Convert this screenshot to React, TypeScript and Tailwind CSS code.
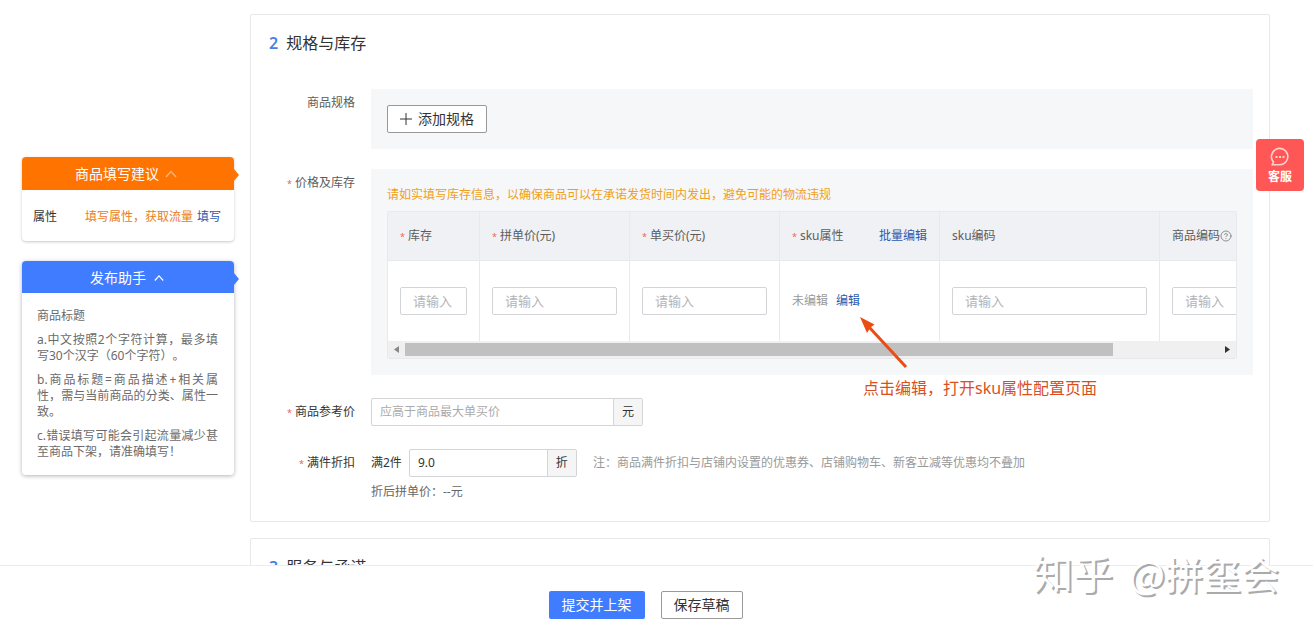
import React from "react";
import { CircleHelp } from "lucide-react";

const tips = [
  ["a.中文按照2个字符计算，最多填", "写30个汉字（60个字符）。"],
  ["b.商品标题=商品描述+相关属", "性，需与当前商品的分类、属性一", "致。"],
  ["c.错误填写可能会引起流量减少甚", "至商品下架，请准确填写！"],
];

const ChevronUp = ({ className }: { className?: string }) => (
  <svg viewBox="0 0 12 8" className={className} fill="none" stroke="currentColor" strokeWidth="1.5">
    <path d="M1 7 6 1.5 11 7" />
  </svg>
);

const Star = () => <span className="mr-[3px] text-[9px] leading-none text-[#f0605f]">*</span>;

const SideHeader = ({ title, className, chevron, notch }: { title: string; className: string; chevron: string; notch: string }) => (
  <button type="button" className={`relative flex w-full items-center justify-center rounded-t text-sm leading-5 text-white ${className}`}>
    {title}
    <ChevronUp className={chevron} />
    <svg viewBox="0 0 5 12" className={`absolute top-3 left-full h-3 w-[5px] ${notch}`}>
      <path d="M0 0 5 6 0 12Z" />
    </svg>
  </button>
);

const Row = ({ label, required, htmlFor, children, className = "" }: { label: string; required?: boolean; htmlFor?: string; children: React.ReactNode; className?: string }) => (
  <div className={`flex items-start ${className}`}>
    <label htmlFor={htmlFor} className="mr-4 w-[104px] shrink-0 pt-1 text-right leading-5">
      {required && <Star />}
      {label}
    </label>
    {children}
  </div>
);

const SkuInput = ({ label }: { label: string }) => (
  <input
    type="text"
    aria-label={label}
    placeholder="请输入"
    className="block h-7 w-full rounded-xs border border-[#d2d4d8] bg-white px-3 text-[13px] placeholder:text-[#b4b4b8]"
  />
);

const th = "h-[49px] border-r border-b border-[#e8e9ee] px-3 text-left font-normal";
const td = "h-20 border-r border-[#e8e9ee] px-3";

const SkuTable = () => (
  <div className="mt-[6px] overflow-hidden rounded-xs border border-[#e8e9ee] bg-white">
    <div className="overflow-hidden">
      <table className="w-[977px] table-fixed border-separate border-spacing-0">
        <colgroup>
          <col className="w-[92px]" />
          <col className="w-[150px]" />
          <col className="w-[150px]" />
          <col className="w-[160px]" />
          <col className="w-[220px]" />
          <col />
        </colgroup>
        <thead className="bg-[#f0f1f5]">
          <tr>
            <th className={th}><Star />库存</th>
            <th className={th}><Star />拼单价(元)</th>
            <th className={th}><Star />单买价(元)</th>
            <th className={th}>
              <div className="flex justify-between">
                <span><Star />sku属性</span>
                <a href="#batch" className="text-[#2c59ae]">批量编辑</a>
              </div>
            </th>
            <th className={th}>sku编码</th>
            <th className={th}>
              <div className="flex items-center">
                商品编码
                <CircleHelp className="size-3 text-[#777]" strokeWidth={1.6} />
              </div>
            </th>
          </tr>
        </thead>
        <tbody>
          <tr>
            <td className={td}><SkuInput label="库存" /></td>
            <td className={td}><SkuInput label="拼单价(元)" /></td>
            <td className={td}><SkuInput label="单买价(元)" /></td>
            <td className={td}>
              <span className="mr-2 text-[#999]">未编辑</span>
              <a href="#edit" className="text-[#2c59ae]">编辑</a>
            </td>
            <td className={td}><SkuInput label="sku编码" /></td>
            <td className={td}><SkuInput label="商品编码" /></td>
          </tr>
        </tbody>
      </table>
    </div>
    <div className="flex h-[17px] items-center bg-[#f0f0f0]">
      <svg viewBox="0 0 17 17" className="size-[17px] shrink-0 fill-[#888]">
        <path d="M11 5v7L6 8.5Z" />
      </svg>
      <div className="flex-1">
        <div className="h-[13px] w-[87%] bg-[#c0c0c0]" />
      </div>
      <svg viewBox="0 0 17 17" className="size-[17px] shrink-0 fill-[#333]">
        <path d="M6 5v7l5-3.5Z" />
      </svg>
    </div>
  </div>
);

export default function App() {
  return (
    <div className="relative flex h-screen flex-col overflow-hidden bg-white font-['Noto_Sans','Noto_Sans_CJK_SC',sans-serif] text-xs text-[#5c5c5c] [text-spacing-trim:space-all]">
      <div className="flex min-h-0 flex-1 items-start overflow-hidden pr-[43px] pl-[22px]">
        <aside className="mt-[157px] mr-4 w-[212px] shrink-0">
          <section className="rounded shadow-[0_1px_3px_rgba(0,0,0,0.22)]">
            <SideHeader title="商品填写建议" className="h-[33px] bg-[#ff7300] pr-1" chevron="ml-1.5 h-2 w-3 text-[#ffb27a]" notch="fill-[#ff7300]" />
            <div className="flex h-[51px] items-center px-[11px] pt-0.5">
              <span className="mr-auto text-[#333]">属性</span>
              <span className="mr-1 text-[#e8801a]">填写属性，获取流量</span>
              <a href="#fill" className="mr-0.5 text-[#2c59ae]">填写</a>
            </div>
          </section>
          <section className="mt-5 rounded shadow-[0_1px_4px_rgba(0,0,0,0.3)]">
            <SideHeader title="发布助手" className="h-8 bg-[#407cff] pt-0.5 pr-0.5" chevron="ml-2 h-2 w-2.5 text-white" notch="fill-[#407cff]" />
            <div className="py-[15px] pr-4 pl-[15px] leading-4 text-[#6b6b6b]">
              <p>商品标题</p>
              {tips.map((lines) => (
                <p key={lines[0]} className="mt-2">
                  {lines.map((line, i) => (
                    <span key={line} className={i < lines.length - 1 ? "block text-justify [text-align-last:justify]" : "block"}>
                      {line}
                    </span>
                  ))}
                </p>
              ))}
            </div>
          </section>
        </aside>

        <main className="min-w-0 flex-1 pt-[14px]">
          <section className="relative rounded-xs border border-[#e8e8e8] pt-4 pr-4 pb-[21px]">
            <h2 className="mb-[34px] pl-[18px] text-base leading-6 text-[#333]">
              <span className="mr-2 font-semibold text-[#4a7fe0]">2</span>规格与库存
            </h2>
            <Row label="商品规格">
              <div className="flex-1 bg-[#f6f7f9] p-4">
                <button type="button" className="flex h-7 items-center rounded-xs border border-[#999] bg-white px-3 text-sm text-[#333]">
                  <svg viewBox="0 0 12 12" className="mr-1.5 size-3" stroke="currentColor">
                    <path d="M6 0v12M0 6h12" />
                  </svg>
                  添加规格
                </button>
              </div>
            </Row>
            <Row label="价格及库存" required className="mt-5">
              <div className="min-w-0 flex-1 bg-[#f6f7f9] p-4">
                <p className="leading-5 text-[#f0a020]">请如实填写库存信息，以确保商品可以在承诺发货时间内发出，避免可能的物流违规</p>
                <SkuTable />
              </div>
            </Row>
            <Row label="商品参考价" required htmlFor="ref-price" className="mt-[23px] text-[#333]">
              <div className="flex h-7 w-[272px] rounded-xs border border-[#d2d4d8]">
                <input id="ref-price" type="text" placeholder="应高于商品最大单买价" className="min-w-0 flex-1 px-2 placeholder:text-[#aaa]" />
                <span className="flex w-[29px] items-center justify-center border-l border-[#d2d4d8] bg-[#f5f5f6]">元</span>
              </div>
            </Row>
            <Row label="满件折扣" required htmlFor="discount" className="mt-[23px] text-[#333]">
              <div>
                <div className="flex items-center">
                  <span className="mr-[7px]">满2件</span>
                  <div className="flex h-7 w-[168px] rounded-xs border border-[#d2d4d8]">
                    <input id="discount" type="text" defaultValue="9.0" className="min-w-0 flex-1 px-2" />
                    <span className="flex w-[29px] items-center justify-center border-l border-[#d2d4d8] bg-[#f5f5f6]">折</span>
                  </div>
                  <span className="ml-4 text-[#999]">注：商品满件折扣与店铺内设置的优惠券、店铺购物车、新客立减等优惠均不叠加</span>
                </div>
                <p className="mt-[7px] leading-4 text-[#666]">折后拼单价：--元</p>
              </div>
            </Row>

            {/* hint pointing at the sku edit link */}
            <div className="pointer-events-none absolute top-[302px] left-[608px] text-[#ea4c14]">
              <svg viewBox="0 0 50 54" className="h-[54px] w-[50px]">
                <path d="M47 50 10 10" stroke="currentColor" strokeWidth="3" fill="none" />
                <path d="M1 0 15.500 7.500 11.500 10.500 8 16Z" fill="currentColor" />
              </svg>
              <p className="mt-[5px] ml-1 text-base leading-6 text-[#d9501e]">点击编辑，打开sku属性配置页面</p>
            </div>
          </section>

          <section className="mt-4 rounded-xs border border-[#e8e8e8] pt-4 pb-10">
            <h2 className="pl-[18px] text-base leading-6 text-[#333]">
              <span className="mr-2 font-semibold text-[#4a7fe0]">3</span>服务与承诺
            </h2>
          </section>
        </main>
      </div>

      <footer className="flex h-[66px] shrink-0 justify-center border-t border-[#ececec] bg-white pt-[25px] pr-[22px] text-sm">
        <button type="button" className="h-7 rounded-xs bg-[#407cff] px-[13px] text-white">提交并上架</button>
        <button type="button" className="ml-4 h-7 rounded-xs border border-[#999] px-3 text-[#333]">保存草稿</button>
      </footer>

      <button type="button" className="absolute top-[139px] right-[9px] flex h-[52px] w-12 flex-col items-center rounded bg-[#ff5656] pt-2 font-semibold text-white">
        <svg viewBox="0 0 20 20" className="size-5" fill="none" stroke="#ffd0cc" strokeWidth="1.6">
          <path d="M2 17.800H10A8.200 8.200 0 1 0 3.600 15.200Z" strokeLinejoin="round" />
          <path d="M5.500 10h2M9 10h2M12.500 10h2" strokeWidth="2" />
        </svg>
        <span className="mt-0.5 leading-4">客服</span>
      </button>

      <div className="pointer-events-none absolute right-[34px] bottom-7 flex items-baseline gap-4 font-['Noto_Sans_CJK_SC',sans-serif] text-[40px] leading-[60px] text-white [text-shadow:2px_2px_0_#aaa]">
        <span>知乎</span>
        <span className="text-[38px]">@拼玺会</span>
      </div>
    </div>
  );
}
